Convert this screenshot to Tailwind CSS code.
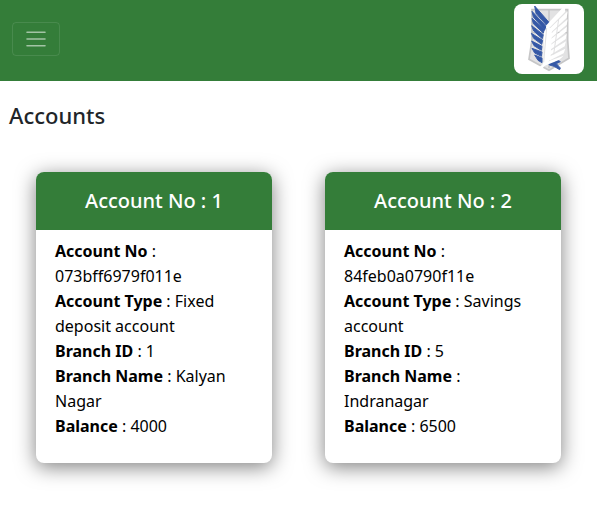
<!DOCTYPE html>
<html lang="en">
<head>
<meta charset="utf-8">
<meta name="viewport" content="width=device-width, initial-scale=1">
<title>Accounts</title>
<script src="https://cdn.jsdelivr.net/npm/@tailwindcss/browser@4"></script>
</head>
<body class="bg-white font-['Noto_Sans',sans-serif] text-black">
<header class="flex items-start justify-between bg-[#347d39] pt-1 pr-[13px] pb-[7px] pl-3">
  <button type="button" aria-label="Toggle navigation" class="mt-[18px] flex h-[34px] w-12 items-center justify-center rounded border border-white/10">
    <svg class="size-6" viewBox="0 0 24 24" fill="none" stroke="#fff" stroke-opacity=".55" stroke-width="1.6" stroke-linecap="round" aria-hidden="true"><path d="M3 5.2h18M3 12h18M3 18.8h18"/></svg>
  </button>
  <a href="#" aria-label="Home" class="block rounded-lg bg-white">
    <svg class="size-[70px]" viewBox="26 12 210 210" aria-hidden="true">
      <path d="M80 29H187V120L191 175L131 211L71 178L80 120Z" fill="#e2e2e3" stroke="#c6c6c7" stroke-width="5"/>
      <path d="M131 30V205M78 98H186" stroke="#c4c4c5" stroke-width="4"/>
      <g fill="#3558a6" stroke="#3c5ea9" stroke-width="3" stroke-linejoin="round">
        <path d="M88 18L131 67L126 79L92 40Z"/>
        <path d="M80 34L124 81L119 91L84 51Z"/>
        <path d="M80 55L117 88L114 99L84 71Z"/>
        <path d="M79 77L114 104L111 116L85 93Z"/>
        <path d="M78 100L112 121L109 133L85 115Z"/>
        <path d="M79 123L110 139L108 151L86 137Z"/>
        <path d="M80 145L110 156L108 169L88 159Z"/>
        <path d="M88 165L110 174L110 188L98 181Z"/>
        <path d="M129 188L145 187L159 181L165 185L153 191L165 204L163 209L146 199L132 195Z"/>
      </g>
      <path d="M126 76L116 99L113 192L88 214L110 206L128 187L136 168L140 91Z" fill="#fff"/>
      <g fill="#fff">
        <path d="M180 14L123 76L120 96L179 36Z"/>
        <path d="M187 34L128 91L119 114L184 53Z"/>
        <path d="M187 58L127 109L118 130L184 74Z"/>
        <path d="M185 80L126 125L117 147L183 95Z"/>
        <path d="M184 102L126 142L116 162L181 117Z"/>
        <path d="M182 124L125 159L114 177L178 139Z"/>
        <path d="M180 146L124 174L112 192L175 160Z"/>
        <path d="M175 167L125 185L104 203L162 179Z"/>
      </g>
      <path d="M160 58L145 163M124 84L115 187" stroke="#e0e0e1" stroke-width="3" fill="none"/>
    </svg>
  </a>
</header>
<main>
  <h1 class="px-[9px] pt-[19px] text-[22px] leading-[30px] font-medium text-[#212529]">Accounts</h1>
  <div class="grid grid-cols-2 gap-[53px] px-9 pt-[42px] pb-11">
    <article class="overflow-hidden rounded-lg shadow-[0_4px_20px_rgba(0,0,0,0.5)]">
      <h2 class="bg-[#347d39] py-[14px] text-center text-[20px] leading-[30px] font-medium text-white">Account No : 1</h2>
      <div class="px-[19px] pt-[9px] pb-6 text-[16px] leading-[25px]">
        <p><strong>Account No</strong> : 073bff6979f011e</p>
        <p><strong>Account Type</strong> : Fixed deposit account</p>
        <p><strong>Branch ID</strong> : 1</p>
        <p><strong>Branch Name</strong> : Kalyan Nagar</p>
        <p><strong>Balance</strong> : 4000</p>
      </div>
    </article>
    <article class="overflow-hidden rounded-lg shadow-[0_4px_20px_rgba(0,0,0,0.5)]">
      <h2 class="bg-[#347d39] py-[14px] text-center text-[20px] leading-[30px] font-medium text-white">Account No : 2</h2>
      <div class="px-[19px] pt-[9px] pb-6 text-[16px] leading-[25px]">
        <p><strong>Account No</strong> : 84feb0a0790f11e</p>
        <p><strong>Account Type</strong> : Savings account</p>
        <p><strong>Branch ID</strong> : 5</p>
        <p><strong>Branch Name</strong> : Indranagar</p>
        <p><strong>Balance</strong> : 6500</p>
      </div>
    </article>
  </div>
</main>
</body>
</html>
